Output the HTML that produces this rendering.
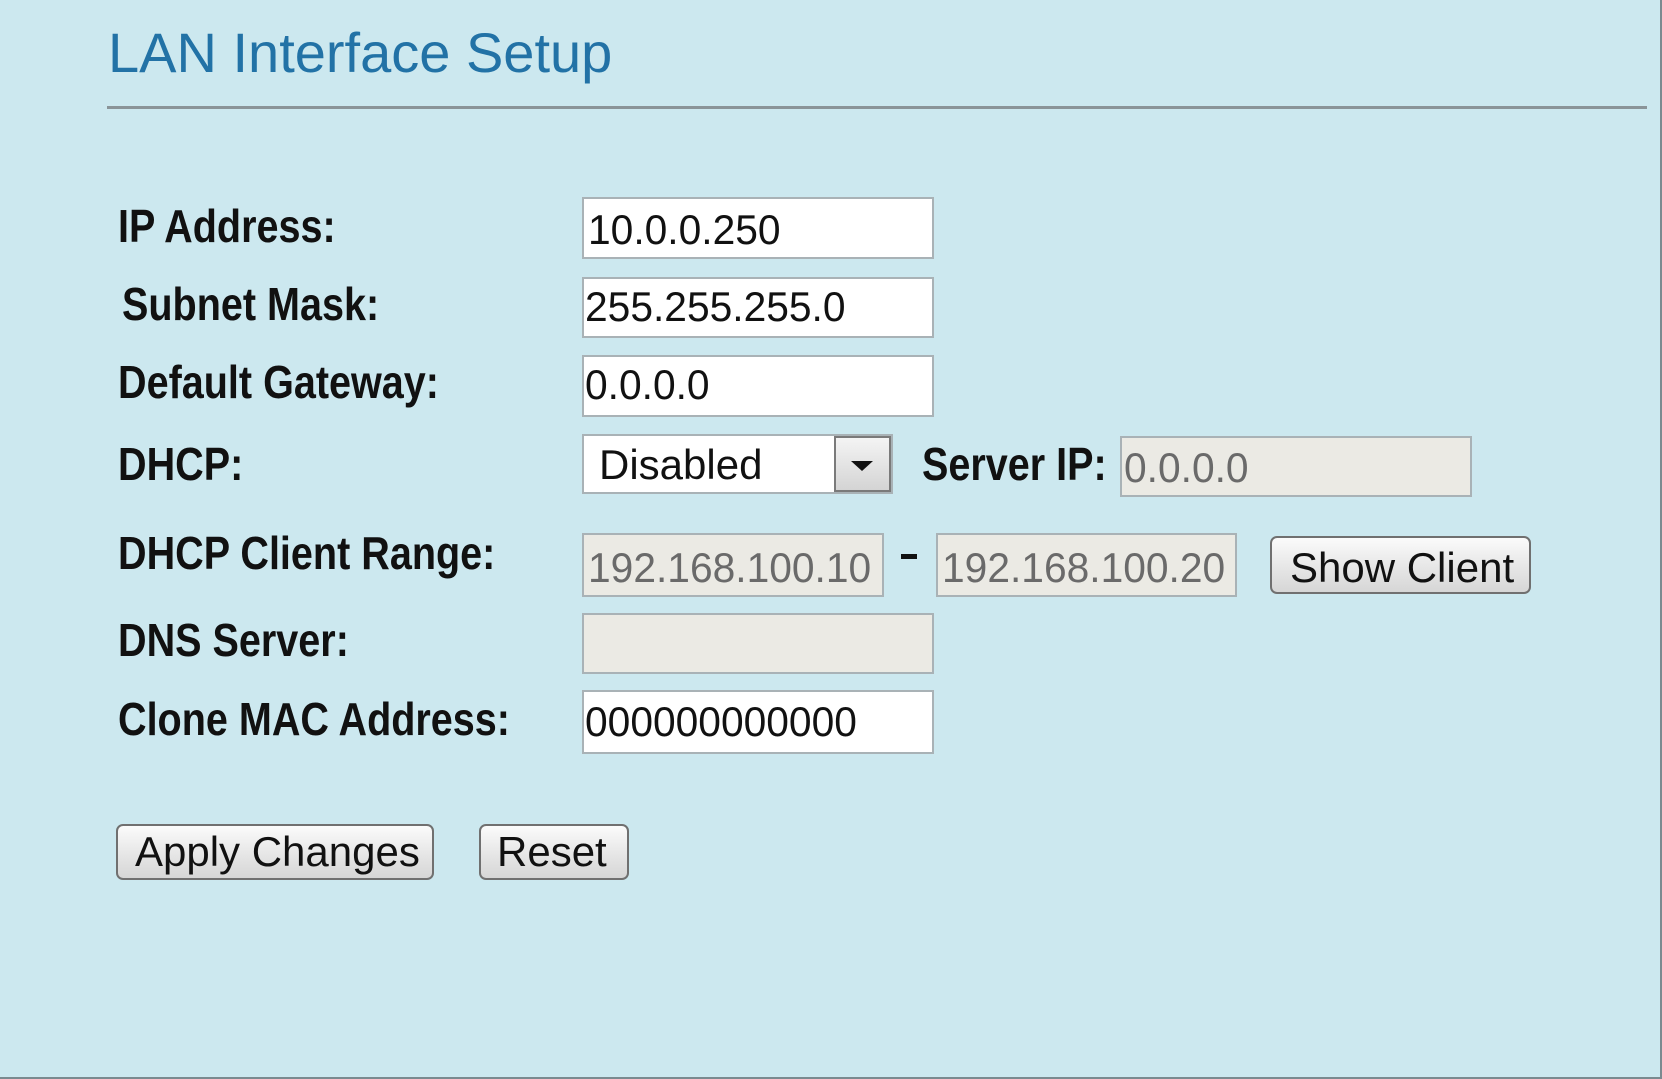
<!DOCTYPE html>
<html><head><meta charset="utf-8"><style>
html,body{margin:0;padding:0}
body{width:1660px;height:1077px;background:#cce8ef;position:relative;overflow:hidden;border-right:2px solid #7a8a90;border-bottom:2px solid #7a8a90;font-family:"Liberation Sans",Arial,sans-serif}
.t{position:absolute;white-space:nowrap;line-height:1;transform-origin:left top}
.l{font-size:46px;font-weight:bold;color:#111;transform:scaleX(.86)}
.v{font-size:42px;color:#111;transform:scaleX(.97)}
.g{color:#6a6a6a}
.box{position:absolute;box-sizing:border-box;border:2px solid #a9b2b6;background:#fff;overflow:hidden}
.dis{background:#ebeae4}
.btn{position:absolute;box-sizing:border-box;border:2px solid #707070;border-radius:7px;background:linear-gradient(#fbfbfb,#e6e6e6 55%,#d6d6d6)}
</style></head><body>
<div class="t" style="left:108px;top:25px;font-size:56px;color:#2272a6">LAN Interface Setup</div>
<div style="position:absolute;left:107px;top:106px;width:1540px;height:3px;background:#8a9498"></div>

<div class="t l" style="left:118px;top:203px">IP Address:</div>
<div class="t l" style="left:122px;top:281px">Subnet Mask:</div>
<div class="t l" style="left:118px;top:359px">Default Gateway:</div>
<div class="t l" style="left:118px;top:441px">DHCP:</div>
<div class="t l" style="left:118px;top:530px">DHCP Client Range:</div>
<div class="t l" style="left:118px;top:617px">DNS Server:</div>
<div class="t l" style="left:118px;top:696px">Clone MAC Address:</div>

<div class="box" style="left:582px;top:197px;width:352px;height:62px"></div>
<div class="t v" style="left:588px;top:209px">10.0.0.250</div>
<div class="box" style="left:582px;top:277px;width:352px;height:61px"></div>
<div class="t v" style="left:585px;top:286px">255.255.255.0</div>
<div class="box" style="left:582px;top:355px;width:352px;height:62px"></div>
<div class="t v" style="left:585px;top:364px">0.0.0.0</div>

<div class="box" style="left:582px;top:434px;width:311px;height:60px"></div>
<div class="t" style="left:599px;top:444px;font-size:42px;color:#111">Disabled</div>
<div style="position:absolute;left:834px;top:436px;width:57px;height:56px;box-sizing:border-box;border:2px solid #7a7a7a;background:linear-gradient(#f4f4f4,#d4d4d4)"></div>
<div style="position:absolute;left:851px;top:461px;width:0;height:0;border-left:11px solid transparent;border-right:11px solid transparent;border-top:10px solid #111"></div>

<div class="t l" style="left:922px;top:441px">Server IP:</div>
<div class="box dis" style="left:1120px;top:436px;width:352px;height:61px"></div>
<div class="t v g" style="left:1124px;top:447px">0.0.0.0</div>

<div class="box dis" style="left:582px;top:533px;width:302px;height:64px"><div class="t v g" style="left:4px;top:12px">192.168.100.10</div></div>
<div style="position:absolute;left:901px;top:554px;width:16px;height:5px;background:#111"></div>
<div class="box dis" style="left:936px;top:533px;width:301px;height:64px"><div class="t v g" style="left:4px;top:12px">192.168.100.20</div></div>
<div class="btn" style="left:1270px;top:536px;width:261px;height:58px"></div>
<div class="t" style="left:1290px;top:547px;font-size:42px;color:#111">Show Client</div>

<div class="box dis" style="left:582px;top:613px;width:352px;height:61px"></div>
<div class="box" style="left:582px;top:690px;width:352px;height:64px"></div>
<div class="t v" style="left:585px;top:701px">000000000000</div>

<div class="btn" style="left:116px;top:824px;width:318px;height:56px"></div>
<div class="t" style="left:135px;top:831px;font-size:42px;color:#111">Apply Changes</div>
<div class="btn" style="left:479px;top:824px;width:150px;height:56px"></div>
<div class="t" style="left:497px;top:831px;font-size:42px;color:#111">Reset</div>
</body></html>
